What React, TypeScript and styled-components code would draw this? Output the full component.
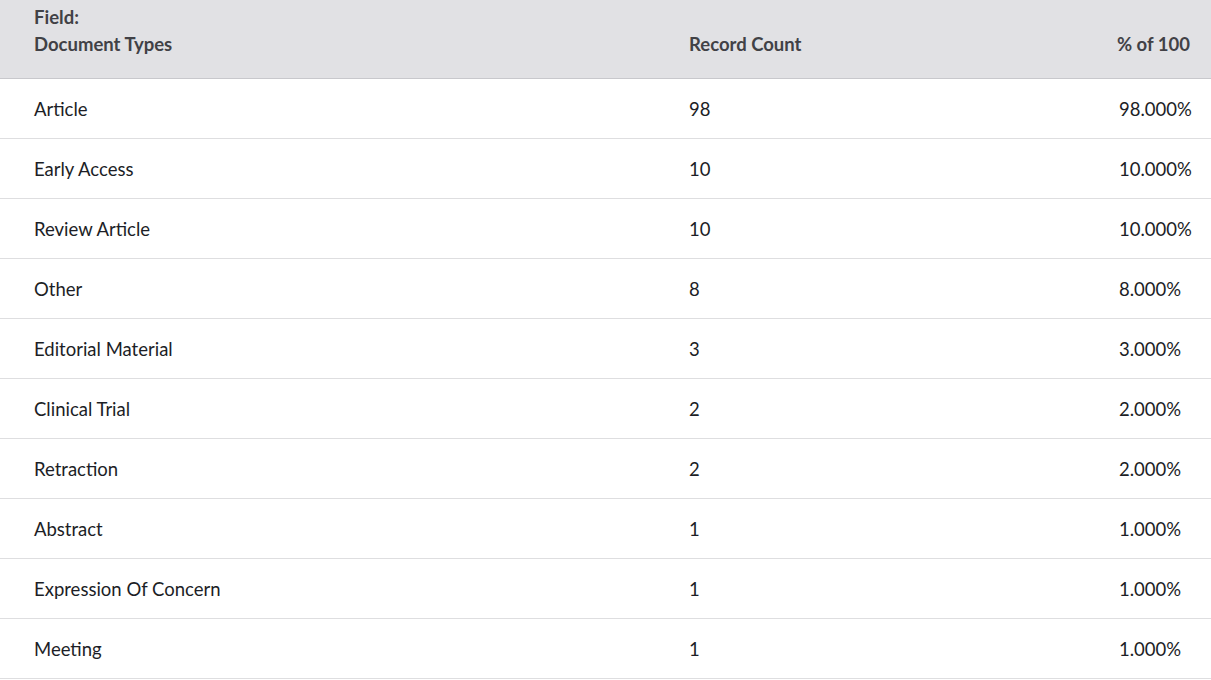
import styled, { createGlobalStyle } from "styled-components";

const GlobalStyle = createGlobalStyle`
    body {
        margin: 0;
        background: #fff;
        font-family: Lato, "Noto Sans", sans-serif;
    }
`;

const Table = styled.div`
    width: 1211px;
    display: flex;
    flex-direction: column;
`;

const HeaderRow = styled.div`
    display: grid;
    grid-template-columns: 655px 430px 1fr;
    height: 78px;
    background: rgba(225, 225, 228, 1);
    border-bottom: 1px solid rgba(200, 200, 204, 1);
    color: rgba(65, 65, 70, 1);
    font-size: 18.5px;
    font-weight: 700;
`;

const HeaderCell = styled.div<{ $right?: boolean }>`
    display: flex;
    flex-direction: column;
    justify-content: flex-end;
    padding: 0 21px 20px ${(p) => (p.$right ? "0" : "34px")};
    line-height: 27px;
    white-space: nowrap;
    text-align: ${(p) => (p.$right ? "right" : "left")};
`;

const Row = styled.div`
    display: grid;
    grid-template-columns: 655px 430px 1fr;
    height: 59px;
    align-items: center;
    border-bottom: 1px solid rgba(222, 222, 224, 1);
    color: rgba(28, 30, 38, 1);
    font-size: 18.5px;
`;

const Cell = styled.div`
    padding-left: 34px;
    padding-top: 1px;
    white-space: nowrap;
`;

const rows: [string, number][] = [
    ["Article", 98],
    ["Early Access", 10],
    ["Review Article", 10],
    ["Other", 8],
    ["Editorial Material", 3],
    ["Clinical Trial", 2],
    ["Retraction", 2],
    ["Abstract", 1],
    ["Expression Of Concern", 1],
    ["Meeting", 1],
];

export default function App() {
    return (
        <>
            <GlobalStyle />
            <Table>
                <HeaderRow>
                    <HeaderCell>
                        <span>Field:</span>
                        <span>Document Types</span>
                    </HeaderCell>
                    <HeaderCell>Record Count</HeaderCell>
                    <HeaderCell $right>% of 100</HeaderCell>
                </HeaderRow>
                {rows.map(([name, count]) => (
                    <Row key={name}>
                        <Cell>{name}</Cell>
                        <Cell>{count}</Cell>
                        <Cell>{((count / 100) * 100).toFixed(3)}%</Cell>
                    </Row>
                ))}
            </Table>
        </>
    );
}
